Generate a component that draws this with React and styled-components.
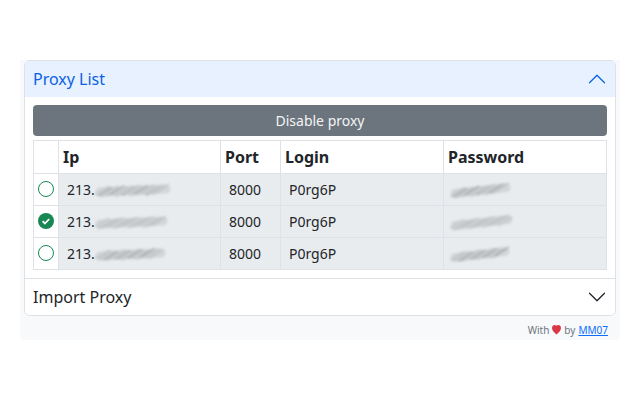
import React from 'react';
import styled, { createGlobalStyle } from 'styled-components';

const GlobalStyle = createGlobalStyle`
	html, body {
		margin: 0;
		padding: 0;
		background: #fff;
	}
	body {
		font-family: 'Noto Sans', sans-serif;
		color: #212529;
	}
`;

const Page = styled.div`
	width: 640px;
	height: 400px;
	box-sizing: border-box;
	padding-top: 60px;
`;

const Panel = styled.div`
	width: 600px;
	margin: 0 20px;
	height: 280px;
	box-sizing: border-box;
	padding: 0 4px;
	background: #f8f9fa;
	border-radius: 0 0 4px 4px;
`;

const Accordion = styled.div`
	background: #fff;
	border: 1px solid #dee2e6;
	border-radius: 6px;
	overflow: hidden;
`;

const Header = styled.div`
	height: 36px;
	box-sizing: border-box;
	padding: 0 8px;
	display: flex;
	align-items: center;
	justify-content: space-between;
	font-size: 16px;
	color: ${(props) => (props.open ? '#0c63e4' : '#212529')};
	background: ${(props) => (props.open ? '#e7f1ff' : '#fff')};
`;

const Body = styled.div`
	padding: 8px;
	border-bottom: 1px solid #dee2e6;
`;

const DisableButton = styled.div`
	height: 31px;
	border-radius: 4px;
	background: #6c757d;
	color: #f3f4f5;
	font-size: 14px;
	display: flex;
	align-items: center;
	justify-content: center;
	margin-bottom: 4px;
`;

const Table = styled.table`
	width: 574px;
	table-layout: fixed;
	border-collapse: collapse;
	font-size: 14px;
`;

const Th = styled.th`
	height: 33px;
	box-sizing: border-box;
	padding: 0 4px;
	text-align: left;
	font-size: 16px;
	font-weight: 700;
	border: 1px solid #dee2e6;
`;

const Td = styled.td`
	height: 32px;
	box-sizing: border-box;
	padding: 0 8px;
	border: 1px solid #dee2e6;
	background: ${(props) => (props.select ? '#fff' : '#e9ecef')};
`;

const RadioCell = styled(Td)`
	padding: 0;

	svg {
		display: block;
		margin: -2px auto 0;
	}
`;

const IpCell = styled.span`
	display: flex;
	align-items: center;
`;

const Smudge = styled.svg`
	display: block;
	flex: none;
	margin-left: ${(props) => props.$shift}px;
`;

const Footer = styled.div`
	display: flex;
	justify-content: flex-end;
	align-items: center;
	gap: 3px;
	padding: 7px 8px 0 0;
	font-size: 10px;
	line-height: 14px;
	color: #6c757d;
`;

const AuthorLink = styled.a`
	color: #0d6efd;
	text-decoration: underline;
`;

const Chevron = ({ up, color }) => (
	<svg width="20" height="20" viewBox="0 0 16 16" fill={color}>
		<path
			fillRule="evenodd"
			transform={up ? 'rotate(180 8 8)' : undefined}
			d="M1.646 4.646a.5.5 0 0 1 .708 0L8 10.293l5.646-5.647a.5.5 0 0 1 .708.708l-6 6a.5.5 0 0 1-.708 0l-6-6a.5.5 0 0 1 0-.708z"
		/>
	</svg>
);

const Radio = ({ checked }) =>
	checked ? (
		<svg width="16" height="16" viewBox="0 0 16 16">
			<circle cx="8" cy="8" r="8" fill="#198754" />
			<path d="M4.600 8.200l2.300 2.300 4.300-4.500" fill="none" stroke="#fff" strokeWidth="1.8" />
		</svg>
	) : (
		<svg width="16" height="16" viewBox="0 0 16 16">
			<circle cx="8" cy="8" r="7.500" fill="#fff" stroke="#198754" />
		</svg>
	);

// blurred-out values in the screenshot: a pale band with soft diagonal strokes on top
const Blur = ({ width, seed, tilt = 0, shift = 0 }) => {
	const strokes = [];
	const count = Math.floor((width - 14) / 3);
	const mid = 12;
	for (let i = 0; i < count; i++) {
		const x = 1 + i * 3;
		const y = mid + tilt * (0.5 - i / count) + ((i * seed * 7) % 5) / 2 - 1;
		const dark = (i * seed) % 4 === 1;
		strokes.push(
			<path
				key={i}
				d={`M${x} ${y + 5}L${x + 14} ${y - 4}`}
				stroke={dark ? '#9c9fa2' : '#c2c5c8'}
				strokeWidth={dark ? 1.4 : 2}
				opacity="0.75"
			/>
		);
	}
	return (
		<Smudge $shift={shift} width={width} height="24" viewBox={`0 0 ${width} 24`} fill="none">
			<g style={{ filter: 'blur(0.8px)' }}>
				<path
					d={`M6 ${mid + tilt / 2 + 1}L${width - 6} ${mid - tilt / 2}`}
					stroke="#d3d5d8"
					strokeWidth="9"
					strokeLinecap="round"
				/>
				{strokes}
			</g>
		</Smudge>
	);
};

const rows = [
	{ ip: 78, pass: 63, checked: false, seed: 1 },
	{ ip: 75, pass: 65, checked: true, seed: 2 },
	{ ip: 73, pass: 62, checked: false, seed: 3 },
];

const App = () => (
	<Page>
		<GlobalStyle />
		<Panel>
			<Accordion>
				<Header open>
					Proxy List
					<Chevron up color="#0c63e4" />
				</Header>
				<Body>
					<DisableButton>Disable proxy</DisableButton>
					<Table>
						<colgroup>
							<col style={{ width: 25 }} />
							<col style={{ width: 162 }} />
							<col style={{ width: 60 }} />
							<col style={{ width: 163 }} />
							<col />
						</colgroup>
						<thead>
							<tr>
								<Th />
								<Th>Ip</Th>
								<Th>Port</Th>
								<Th>Login</Th>
								<Th>Password</Th>
							</tr>
						</thead>
						<tbody>
							{rows.map((row) => (
								<tr key={row.seed}>
									<RadioCell select>
										<Radio checked={row.checked} />
									</RadioCell>
									<Td>
										<IpCell>
											213.
											<Blur width={row.ip} seed={row.seed} tilt={2} shift={-1} />
										</IpCell>
									</Td>
									<Td>8000</Td>
									<Td>P0rg6P</Td>
									<Td>
										<Blur width={row.pass} seed={row.seed} tilt={5} shift={-3} />
									</Td>
								</tr>
							))}
						</tbody>
					</Table>
				</Body>
				<Header>
					Import Proxy
					<Chevron color="#212529" />
				</Header>
			</Accordion>
			<Footer>
				With
				<svg width="9" height="10" viewBox="0 0 16 16" fill="#dc3545" preserveAspectRatio="none">
					<path d="M8 1.314C12.438-3.248 23.534 4.735 8 15-7.534 4.736 3.562-3.248 8 1.314z" />
				</svg>
				by <AuthorLink href="#">MM07</AuthorLink>
			</Footer>
		</Panel>
	</Page>
);

export default App;
